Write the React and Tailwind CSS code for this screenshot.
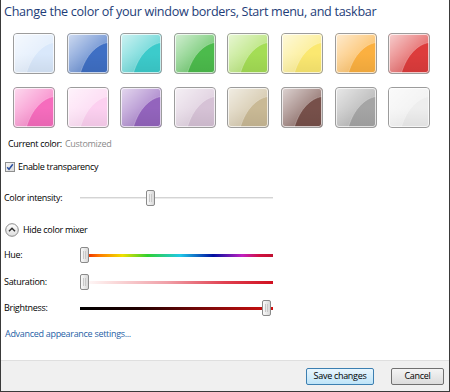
import React from "react";

const swatches = [
  "bg-[#d9e8fb]", "bg-[#3f6fc4]", "bg-[#3ccbcb]", "bg-[#4cbb4c]",
  "bg-[#a4dd55]", "bg-[#fbe870]", "bg-[#fbb040]", "bg-[#dd3c3c]",
  "bg-[#f66cbd]", "bg-[#fcd0f0]", "bg-[#9364bd]", "bg-[#d6c2d6]",
  "bg-[#c9b995]", "bg-[#77504a]", "bg-[#a5a5a5]", "bg-[#eeeeee]",
];

function Swatch({ cls }) {
  return (
    <div className={`relative w-[42px] h-[41px] rounded-[4px] border border-[#9c9c9c] overflow-hidden ${cls}`}>
      <svg className="absolute inset-0 w-full h-full" viewBox="0 0 42 41" preserveAspectRatio="none">
        <defs>
          <linearGradient id="hl" x1="0" y1="0" x2="1" y2="1">
            <stop offset="0" stopColor="#fff" stopOpacity="0.75" />
            <stop offset="0.6" stopColor="#fff" stopOpacity="0.3" />
            <stop offset="1" stopColor="#fff" stopOpacity="0.1" />
          </linearGradient>
          <linearGradient id="sh" x1="0" y1="0" x2="0" y2="1">
            <stop offset="0.5" stopColor="#000" stopOpacity="0" />
            <stop offset="1" stopColor="#000" stopOpacity="0.06" />
          </linearGradient>
        </defs>
        <rect x="0" y="0" width="42" height="41" fill="url(#sh)" />
        <path d="M0 0 H42 V9 C30 11 19 22 13 41 H0 Z" fill="url(#hl)" />
        <path d="M42 9 C30 11 19 22 13 41" fill="none" stroke="#fff" strokeOpacity="0.3" strokeWidth="0.8" />
      </svg>
      <div className="absolute inset-0 rounded-[3px] border border-white/70" />
    </div>
  );
}

function Thumb() {
  return (
    <div className="absolute top-1/2 -translate-y-1/2 w-[9px] h-[16px] rounded-[2px] border border-[#8a8a8a] bg-gradient-to-r from-[#fafafa] to-[#d8d8d8] flex items-center justify-center">
      <div className="w-[3px] h-[8px] border-l border-r border-[#c8c8c8]" />
    </div>
  );
}

function Slider({ track, thumbPos }) {
  return (
    <div className="relative w-[193px] h-[16px] flex items-center">
      <div className={`w-full ${track}`} />
      <div className={`absolute top-0 bottom-0 ${thumbPos}`}>
        <Thumb />
      </div>
    </div>
  );
}

function Row({ label, children, mt }) {
  return (
    <div className={`flex items-center h-[16px] ${mt}`}>
      <div className="w-[76px] text-[9px] tracking-[-0.3px] text-black">{label}</div>
      {children}
    </div>
  );
}

export default function App() {
  return (
    <div
      className="w-[450px] h-[392px] bg-white border-l border-r border-b border-[#3a3a3a] flex flex-col"
      style={{ fontFamily: '"Open Sans", "Noto Sans", sans-serif' }}
    >
      <div className="pl-[3px] flex flex-col">
        <div className="h-[25px] flex items-center text-[12.6px] tracking-[-0.3px] text-[#1e3d78]">
          Change the color of your window borders, Start menu, and taskbar
        </div>

        <div className="mt-[8px] ml-[9px] grid grid-cols-[repeat(8,42px)] gap-x-[11.6px] gap-y-[13px]">
          {swatches.map((s, i) => (
            <Swatch key={i} cls={s} />
          ))}
        </div>

        <div className="mt-[8px] h-[16px] flex items-center pl-[4px] text-[9px] tracking-[-0.3px]">
          <span className="text-black">Current color:</span>
          <span className="ml-[3px] text-[#8a8a8a]">Customized</span>
        </div>

        <div className="mt-[7px] h-[16px] flex items-center text-[9px] tracking-[-0.3px]">
          <div className="ml-[1px] w-[10px] h-[10px] border border-[#8e8f8f] bg-gradient-to-br from-[#f4f4f4] to-[#dcdcdc] flex items-center justify-center">
            <svg width="8" height="8" viewBox="0 0 8 8">
              <path d="M1.2 4.2 L3 6.3 L6.8 1.2" fill="none" stroke="#2a4fa0" strokeWidth="1.5" />
            </svg>
          </div>
          <span className="ml-[3px] text-black">Enable transparency</span>
        </div>

        <Row label="Color intensity:" mt="mt-[15px]">
          <Slider track="h-[2px] bg-[#d4d4d4] border-b border-[#ececec]" thumbPos="left-[66px]" />
        </Row>

        <div className="mt-[16px] h-[16px] flex items-center text-[9px] tracking-[-0.3px]">
          <svg width="14" height="14" viewBox="0 0 14 14" className="ml-[1px]">
            <defs>
              <linearGradient id="cg" x1="0" y1="0" x2="0" y2="1">
                <stop offset="0" stopColor="#ffffff" />
                <stop offset="1" stopColor="#dedede" />
              </linearGradient>
            </defs>
            <circle cx="7" cy="7" r="6.3" fill="url(#cg)" stroke="#8a8a8a" strokeWidth="1" />
            <path d="M4 8.3 L7 5.3 L10 8.3" fill="none" stroke="#333" strokeWidth="1.5" />
          </svg>
          <span className="ml-[4px] text-black">Hide color mixer</span>
        </div>

        <Row label="Hue:" mt="mt-[9px]">
          <Slider
            track="h-[3px] bg-[linear-gradient(to_right,#e00000_0%,#ff7a00_10%,#f0e000_22%,#30d030_35%,#20c8e8_52%,#0010a0_69%,#c020c0_84%,#d01040_93%,#c01030_100%)]"
            thumbPos="left-0"
          />
        </Row>

        <Row label="Saturation:" mt="mt-[11px]">
          <Slider
            track="h-[3px] bg-[linear-gradient(to_right,#ffffff_0%,#fbe0e0_15%,#f0a0a8_45%,#e04050_75%,#d01020_100%)]"
            thumbPos="left-0"
          />
        </Row>

        <Row label="Brightness:" mt="mt-[10px]">
          <Slider
            track="h-[3px] bg-[linear-gradient(to_right,#000000_0%,#200000_30%,#700808_60%,#d01010_100%)]"
            thumbPos="left-[182px]"
          />
        </Row>

        <div className="mt-[10px] h-[16px] flex items-center pl-[1px] text-[9px] tracking-[-0.3px] text-[#1f5fa6]">
          Advanced appearance settings...
        </div>
      </div>

      <div className="flex-1" />

      <div className="h-[31px] bg-[#f0f0f0] border-t border-[#dfdfdf] flex items-center justify-end pr-[5px] gap-[17px]">
        <button className="w-[68px] h-[17px] rounded-[2px] border border-[#3c7fb1] bg-gradient-to-b from-[#eaf6fd] to-[#bee4f8] text-[9px] tracking-[-0.3px] text-black flex items-center justify-center">
          Save changes
        </button>
        <button className="w-[53px] h-[17px] rounded-[2px] border border-[#707070] bg-gradient-to-b from-[#f4f4f4] to-[#dcdcdc] text-[9px] tracking-[-0.3px] text-black flex items-center justify-center">
          Cancel
        </button>
      </div>
    </div>
  );
}
